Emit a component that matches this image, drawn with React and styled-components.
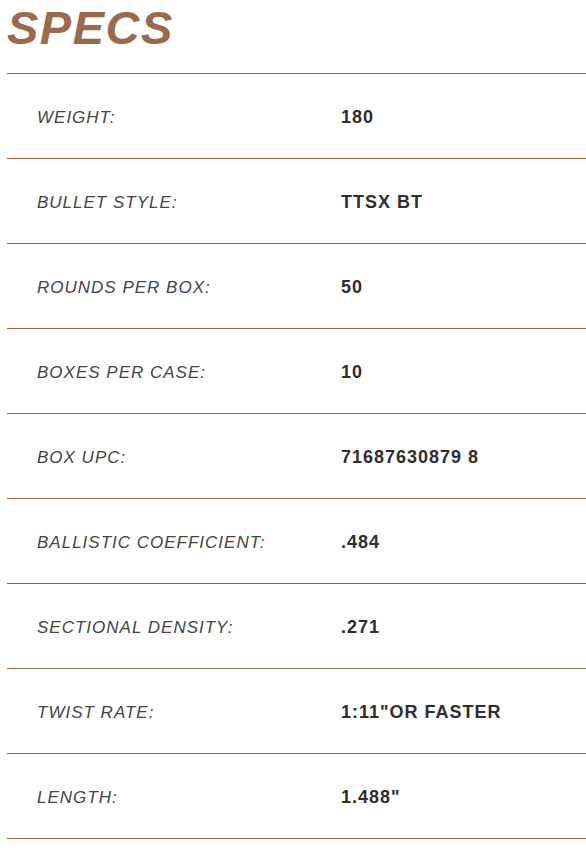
import React from "react";
import styled, { createGlobalStyle } from "styled-components";

const GlobalStyle = createGlobalStyle`
  body {
    margin: 0;
    background: #fff;
    font-family: "Liberation Sans", Arial, sans-serif;
  }
`;

const Wrapper = styled.div`
  padding-left: 7px;
  width: 586px;
  box-sizing: border-box;
`;

const Title = styled.h2`
  margin: 0;
  height: 73px;
  padding-top: 1px;
  box-sizing: border-box;
  font-size: 47px;
  line-height: 1.15;
  font-weight: 700;
  font-style: italic;
  letter-spacing: 1.5px;
  color: #996a4b;
`;

const List = styled.div`
  border-top: 1px solid #996a4b;
`;

const Row = styled.div`
  display: grid;
  grid-template-columns: 304px 1fr;
  align-items: center;
  height: 81px;
  padding: 3px 0 0 30px;
  border-bottom: 1px solid #996a4b;
`;

const Label = styled.span`
  font-size: 17px;
  font-style: italic;
  letter-spacing: 1px;
  color: #444;
`;

const Value = styled.span`
  font-size: 18px;
  font-weight: 700;
  letter-spacing: 1px;
  color: #2e2e2e;
`;

const specs = [
  ["WEIGHT:", "180"],
  ["BULLET STYLE:", "TTSX BT"],
  ["ROUNDS PER BOX:", "50"],
  ["BOXES PER CASE:", "10"],
  ["BOX UPC:", "71687630879 8"],
  ["BALLISTIC COEFFICIENT:", ".484"],
  ["SECTIONAL DENSITY:", ".271"],
  ["TWIST RATE:", "1:11\"OR FASTER"],
  ["LENGTH:", "1.488\""],
];

const App = () => {
  return (
    <>
      <GlobalStyle />
      <Wrapper>
        <Title>SPECS</Title>
        <List>
          {specs.map(([label, value]) => (
            <Row key={label}>
              <Label>{label}</Label>
              <Value>{value}</Value>
            </Row>
          ))}
        </List>
      </Wrapper>
    </>
  );
};

export default App;
